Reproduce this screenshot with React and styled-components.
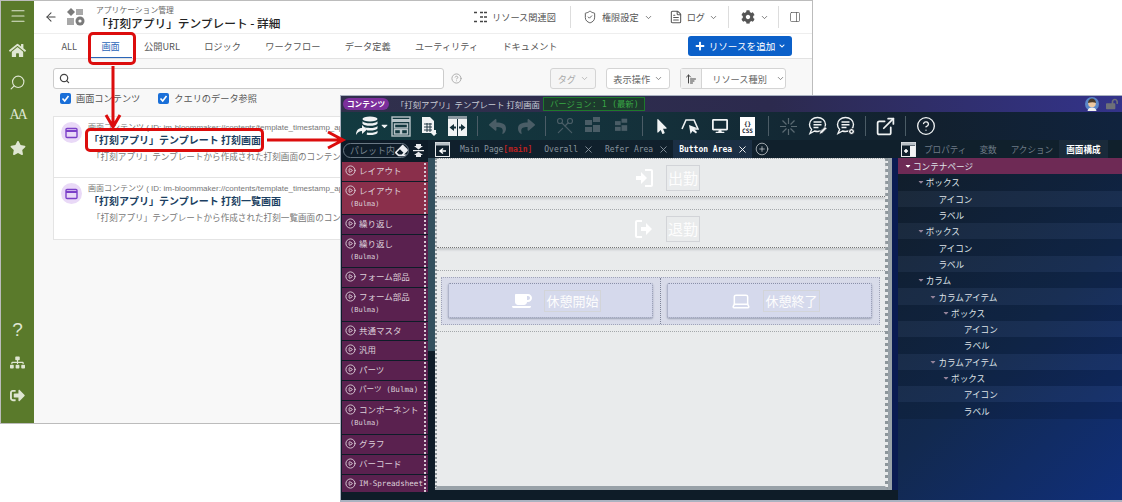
import React from "react";
import styled, { createGlobalStyle } from "styled-components";
import { FaHome, FaStar, FaSitemap, FaCog, FaChevronDown, FaCoffee, FaEraser, FaReply, FaMousePointer, FaDesktop, FaLockOpen, FaPlus, FaSignOutAlt, FaCaretDown } from "react-icons/fa";
import { Search, Menu, ArrowLeft, CircleHelp, ShieldCheck, ChevronDown, FileText, PanelRight, CirclePlay, X, CirclePlus, Laptop, ExternalLink, ArrowUpWideNarrow, Scissors } from "lucide-react";

const JP = `"Noto Sans CJK JP", "Noto Sans", sans-serif`;
const MONO = `"DejaVu Sans Mono", "Noto Sans CJK JP", monospace`;

const Global = createGlobalStyle`
  html, body { margin: 0; padding: 0; background: #fff; }
  body { font-family: ${JP}; }
  * { box-sizing: border-box; }
`;

const Desk = styled.div`
  position: relative;
  width: 1122px;
  height: 502px;
  overflow: hidden;
  background: #fff;
`;

/* back window */
const BackWindow = styled.div`
  position: absolute;
  left: 0;
  top: 0;
  width: 813px;
  height: 424px;
  display: flex;
  background: #fff;
  border: 1px solid #bcbcbc;
  overflow: hidden;
`;
const Side = styled.nav`
  width: 33px;
  flex: none;
  background: #5a7a2b;
  color: #dfe6d2;
  display: flex;
  flex-direction: column;
  align-items: center;
  padding-top: 4px;
`;
const SideItem = styled.div`
  height: ${(p) => p.$h || 32.5}px;
  width: 100%;
  display: flex;
  align-items: center;
  justify-content: center;
  flex: none;
  margin-top: ${(p) => p.$mt || 0}px;
  margin-bottom: ${(p) => p.$mb || 0}px;
`;
const SerifMark = styled.span`
  font-family: "Liberation Serif", serif;
  font-size: 14px;
  letter-spacing: -2px;
  color: #dfe6d2;
`;
const HelpGlyph = styled.span`
  font-family: "Liberation Sans", sans-serif;
  font-size: 19px;
  color: #dfe6d2;
`;
const Main = styled.div`
  flex: 1;
  min-width: 0;
  display: flex;
  flex-direction: column;
`;
const Header = styled.header`
  height: 32px;
  flex: none;
  display: flex;
  align-items: center;
  padding: 0 11px 0 10px;
  color: #444;
`;
const AppIcon = styled.svg`
  width: 19px;
  height: 18px;
  margin-left: 8px;
`;
const HeadTitles = styled.div`
  margin-left: 11px;
  display: flex;
  flex-direction: column;
  line-height: 1;
`;
const Crumb = styled.span`
  font-size: 7.8px;
  color: #666;
  line-height: 10px;
`;
const PageTitle = styled.span`
  font-size: 11.7px;
  font-weight: 500;
  color: #222;
  line-height: 15px;
`;
const HeadRight = styled.div`
  margin-left: auto;
  display: flex;
  align-items: center;
  height: 22px;
`;
const HeadAction = styled.div`
  display: flex;
  align-items: center;
  gap: ${(p) => p.$gap || 5}px;
  font-size: 9.2px;
  color: #555;
  padding: 0 ${(p) => p.$pr ?? 13}px 0 ${(p) => p.$pl ?? 13}px;
  height: 100%;
  border-right: ${(p) => (p.$sep ? "1px solid #ddd" : "none")};
`;
const TabBar = styled.div`
  height: 26px;
  flex: none;
  display: flex;
  align-items: stretch;
  padding: 0 20px 0 15px;
  border-top: 1px solid #eee;
  border-bottom: 1px solid #e2e2e2;
`;
const Tab = styled.div`
  padding: 0 11.8px 0 12.5px;
  display: flex;
  align-items: center;
  font-size: 9.2px;
  color: ${(p) => (p.$on ? "#2b66b8" : "#555")};
  border-bottom: ${(p) => (p.$on ? "1px solid #2b66b8" : "none")};
`;
const AddBtn = styled.button`
  margin: 2px 0 2px auto;
  width: 104px;
  border: 0;
  border-radius: 3px;
  background: #0b60c9;
  color: #fff;
  font-family: ${JP};
  font-size: 9.6px;
  display: flex;
  align-items: center;
  justify-content: center;
  gap: 4px;
  padding: 0;
`;
const Body = styled.div`
  flex: 1;
  background: #f8f8f8;
  padding: 9px 26px 0 19px;
`;
const FilterRow = styled.div`
  display: flex;
  align-items: center;
  height: 21px;
`;
const SearchBox = styled.div`
  width: 392px;
  height: 21px;
  background: #fff;
  border: 1px solid #ccc;
  border-radius: 3px;
  display: flex;
  align-items: center;
  padding-left: 5px;
  color: #444;
`;
const HelpMark = styled.span`
  margin-left: 7px;
  color: #aaa;
  display: flex;
`;
const Select = styled.div`
  height: 21px;
  background: ${(p) => (p.$off ? "#f5f5f5" : "#fff")};
  border: 1px solid #d4d4d4;
  border-radius: 3px;
  display: flex;
  align-items: center;
  justify-content: center;
  gap: 4px;
  font-size: 9.2px;
  color: ${(p) => (p.$off ? "#aaa" : "#666")};
  width: ${(p) => p.$w}px;
  margin-left: ${(p) => p.$ml || 10}px;
  white-space: nowrap;
`;
const SortIcon = styled.div`
  width: 21px;
  height: 100%;
  background: #f2f2f2;
  border-right: 1px solid #d4d4d4;
  display: flex;
  align-items: center;
  justify-content: center;
  color: #444;
  flex: none;
`;
const SelectText = styled.span`
  margin: 0 5px 0 6px;
`;
const CheckRow = styled.div`
  display: flex;
  align-items: center;
  height: 18px;
  margin: 0 0 9px 7px;
  gap: 18px;
`;
const Check = styled.label`
  display: flex;
  align-items: center;
  gap: 5px;
  font-size: 9.2px;
  color: #555;
`;
const CheckBox = styled.span`
  width: 11px;
  height: 11px;
  border-radius: 2px;
  background: #1a6fd8;
  display: flex;
  align-items: center;
  justify-content: center;
`;
const Card = styled.article`
  height: 62px;
  background: #fff;
  border: 1px solid #e4e4e4;
  border-top-width: ${(p) => (p.$first ? 1 : 0)}px;
  display: flex;
  padding: 5px 7px;
`;
const CardBadge = styled.div`
  width: 21px;
  height: 21px;
  border-radius: 50%;
  background: #e9d9f7;
  flex: none;
  display: flex;
  align-items: center;
  justify-content: center;
`;
const CardBody = styled.div`
  margin-left: 6px;
  min-width: 0;
  white-space: nowrap;
  overflow: hidden;
`;
const CardMeta = styled.div`
  font-family: "Liberation Sans", ${JP};
  font-size: 8px;
  color: #777;
  line-height: 11px;
`;
const CardTitle = styled.div`
  font-size: 10px;
  font-weight: 700;
  color: #1c3f62;
  line-height: 13px;
  margin-left: 1px;
`;
const CardDesc = styled.div`
  font-size: 8.6px;
  color: #777;
  line-height: 14px;
  margin: 3px 0 0 4px;
`;

/* front window */
const Editor = styled.div`
  position: absolute;
  left: 340px;
  top: 95px;
  width: 782px;
  height: 407px;
  border: 1px solid #aab2c0;
  border-right: 0;
  border-bottom-width: 2px;
  background: #0e1c28;
  display: flex;
  flex-direction: column;
`;
const TitleBar = styled.div`
  height: 16px;
  flex: none;
  display: flex;
  align-items: center;
  padding: 0 3px 0 2px;
  background: linear-gradient(90deg, #30304c 0%, #2c2a4e 55%, #33338a 100%);
`;
const Pill = styled.span`
  background: #7c2f9b;
  color: #fff;
  font-size: 7.6px;
  font-weight: 700;
  border-radius: 8px;
  padding: 0 4px;
  line-height: 12px;
  width: 46px;
  text-align: center;
`;
const DocName = styled.span`
  margin-left: 7px;
  font-size: 8.4px;
  color: #c9ccd6;
  white-space: nowrap;
`;
const Version = styled.span`
  margin-left: 3px;
  width: 102px;
  height: 14px;
  border: 1px solid #1d7a2b;
  background: #1d3a2d;
  color: #39a845;
  font-size: 8.4px;
  font-family: ${MONO};
  line-height: 12px;
  padding-left: 6px;
  white-space: nowrap;
`;
const TitleTools = styled.div`
  margin-left: auto;
  display: flex;
  align-items: center;
  gap: 7px;
  margin-right: 1px;
`;
const Toolbar = styled.div`
  height: 28px;
  flex: none;
  display: flex;
  align-items: center;
  padding-left: 14px;
  background: linear-gradient(90deg, #123a40 0%, #14303a 40%, #12202e 75%, #10233e 100%);
`;
const Tool = styled.div`
  width: ${(p) => p.$w}px;
  margin-left: ${(p) => p.$ml || 0}px;
  height: 24px;
  flex: none;
  display: flex;
  align-items: center;
  justify-content: center;
  color: ${(p) => (p.$dim ? "#4a5d66" : "#f0f3f4")};
`;
const ToolSep = styled.div`
  width: 1px;
  height: 20px;
  background: #4b5c66;
  margin-left: ${(p) => p.$ml}px;
  flex: none;
`;
const CssChip = styled.div`
  width: 15px;
  height: 19px;
  background: #fff;
  color: #14202c;
  font-family: ${MONO};
  font-size: 6px;
  font-weight: 700;
  line-height: 7px;
  text-align: center;
  padding-top: 3px;
`;
const Workspace = styled.div`
  flex: 1;
  min-height: 0;
  display: flex;
`;
const Palette = styled.aside`
  width: 87px;
  flex: none;
  padding-left: 1px;
`;
const PaletteBar = styled.div`
  height: 22px;
  display: flex;
  align-items: center;
  padding: 0 0 2px 1px;
  color: #e8eaec;
`;
const PaletteSearch = styled.div`
  width: 66px;
  height: 15px;
  border: 1px solid #6a7884;
  border-radius: 8px;
  font-size: 9px;
  color: #76838e;
  padding-left: 6px;
  line-height: 13px;
  display: flex;
  align-items: center;
  justify-content: space-between;
  white-space: nowrap;
  overflow: hidden;
`;
const FoldIcon = styled.svg`
  margin-left: 4px;
  flex: none;
`;
const PaletteRow = styled.div`
  height: ${(p) => p.$h - 1}px;
  margin-bottom: 1px;
  background: ${(p) => (p.$hot ? "#8a2f4b" : "#5a214f")};
  color: #dccfd9;
  display: flex;
  justify-content: space-between;
  padding: 1px 2px 0 3px;
  overflow: hidden;
`;
const RowLabel = styled.div`
  font-family: ${(p) => (p.$latin ? MONO : JP)};
  font-size: ${(p) => (p.$latin ? 7.6 : 8.5)}px;
  line-height: 15px;
  display: flex;
  align-items: center;
  gap: 3px;
  white-space: nowrap;
`;
const RowSub = styled.div`
  font-family: ${MONO};
  font-size: 7px;
  line-height: 13px;
  margin-left: 5px;
`;
const Grip = styled.div`
  width: 2px;
  flex: none;
  height: 100%;
  border-left: 2px dotted #d8c8d4;
`;
const Center = styled.main`
  width: 470px;
  flex: none;
  display: flex;
  flex-direction: column;
`;
const DocTabs = styled.div`
  height: 18px;
  flex: none;
  display: flex;
  align-items: center;
  padding-left: 7px;
  background: #10202c;
`;
const ToggleIcon = styled.svg`
  width: 15px;
  height: 15px;
  flex: none;
`;
const DocTab = styled.div`
  height: 100%;
  display: flex;
  align-items: center;
  gap: 5px;
  font-family: ${MONO};
  font-size: 8px;
  white-space: pre;
  color: ${(p) => (p.$on ? "#fff" : "#88949e")};
  background: ${(p) => (p.$on ? "#1b2f44" : "transparent")};
  padding: 0 ${(p) => p.$pr ?? 8}px 0 ${(p) => p.$pl ?? 10}px;
  font-weight: ${(p) => (p.$on ? 700 : 400)};
`;
const MainTab = styled.span`
  display: inline;
`;
const MainMark = styled.span`
  color: #b92222;
  font-weight: 700;
`;
const CanvasWrap = styled.div`
  height: 332px;
  display: flex;
`;
const Strip = styled.div`
  width: 7px;
  flex: none;
  background: linear-gradient(180deg, #33505e 0 58%, #0e1c28 58%);
`;
const Canvas = styled.div`
  width: 453px;
  flex: none;
  background: #e9ebec;
  border-left: 2px dotted #8e979c;
  border-right: 3px dotted #8e979c;
  border-bottom: 4px solid #98a1a8;
`;
const EdgeStrip = styled.div`
  flex: 1;
  background: linear-gradient(90deg, #98a1a8 0 4px, #0a1b52 4px);
`;
const PunchRow = styled.div`
  height: ${(p) => p.$h}px;
  margin-bottom: ${(p) => p.$mb}px;
  border-top: 1px dotted #a4a8ab;
  border-bottom: 1px dotted #777;
  box-shadow: 0 2px 2px #c6c9cc;
  display: flex;
  align-items: center;
  justify-content: center;
  padding-left: 12px;
  gap: 12px;
  color: #fff;
`;
const LabelBox = styled.span`
  border: 1px solid #d2d4d8;
  color: #fdfdfd;
  font-size: ${(p) => p.$fs || 15}px;
  line-height: ${(p) => p.$lh || 24}px;
  padding: 0 1px;
`;
const Columns = styled.div`
  height: 62px;
  border-top: 1px dotted #a4a8ab;
  border-bottom: 1px dotted #a4a8ab;
  padding: 6px 5px 6px 4px;
`;
const ColumnsInner = styled.div`
  height: 48px;
  background: #d8dbe9;
  border: 1px dotted #a0a4b8;
  display: flex;
`;
const ColumnCell = styled.div`
  flex: 1;
  padding: 5px 7px 5px 6px;
  border-left: ${(p) => (p.$line ? "1px dotted #7e8498" : "none")};
`;
const BreakBtn = styled.div`
  height: 35px;
  background: #d5d9ec;
  border: 1px dotted #8a90a8;
  border-radius: 2px;
  box-shadow: 0 1px 2px #9aa0b4;
  display: flex;
  align-items: center;
  justify-content: center;
  padding-left: 12px;
  gap: 12px;
  color: #fff;
`;
const RightPanel = styled.aside`
  flex: 1;
  display: flex;
  flex-direction: column;
  background: linear-gradient(135deg, #14222f 0%, #12294f 55%, #102f7a 100%);
`;
const PanelTabs = styled.div`
  height: 18px;
  flex: none;
  display: flex;
  align-items: center;
  padding-left: 3px;
  background: #10202c;
  font-size: 8.6px;
  color: #6e7b86;
`;
const PanelTab = styled.span`
  margin-left: ${(p) => p.$ml}px;
  color: ${(p) => (p.$on ? "#fff" : "#6e7b86")};
  background: ${(p) => (p.$on ? "#1a2a3a" : "transparent")};
  font-weight: ${(p) => (p.$on ? 700 : 400)};
  padding: 0 ${(p) => (p.$on ? 7 : 0)}px;
  line-height: 18px;
`;
const TreeRow = styled.div`
  height: 16.3px;
  display: flex;
  align-items: center;
  padding-left: ${(p) => 6 + p.$level * 12.7}px;
  font-size: 8.6px;
  color: #dfe3e8;
  background: ${(p) => (p.$root ? "#6e2a55" : p.$even ? "rgba(255,255,255,0.03)" : "rgba(0,0,0,0.12)")};
  white-space: nowrap;
`;
const Caret = styled.span`
  width: 9px;
  flex: none;
  display: flex;
  visibility: ${(p) => (p.$open ? "visible" : "hidden")};
  color: ${(p) => (p.$root ? "#fff" : "#94839a")};
`;

/* callouts */
const Highlight = styled.div`
  position: absolute;
  left: ${(p) => p.$x}px;
  top: ${(p) => p.$y}px;
  width: ${(p) => p.$w}px;
  height: ${(p) => p.$h}px;
  border: 3px solid #dc0d0d;
  border-radius: 5px;
`;
const Arrows = styled.svg`
  position: absolute;
  left: 0;
  top: 0;
  pointer-events: none;
`;

const TABS = ["ALL", "画面", "公開URL", "ロジック", "ワークフロー", "データ定義", "ユーティリティ", "ドキュメント"];

const PALETTE = [
  ["レイアウト", null, 20, true],
  ["レイアウト", "(Bulma)", 33, true],
  ["繰り返し", null, 20],
  ["繰り返し", "(Bulma)", 33],
  ["フォーム部品", null, 20],
  ["フォーム部品", "(Bulma)", 34],
  ["共通マスタ", null, 19],
  ["汎用", null, 20],
  ["パーツ", null, 20],
  ["パーツ (Bulma)", null, 20],
  ["コンポーネント", "(Bulma)", 34],
  ["グラフ", null, 20],
  ["バーコード", null, 20],
  ["IM-Spreadsheet", null, 18],
];

const TREE = [
  ["コンテナページ", 0, true],
  ["ボックス", 1, true],
  ["アイコン", 2],
  ["ラベル", 2],
  ["ボックス", 1, true],
  ["アイコン", 2],
  ["ラベル", 2],
  ["カラム", 1, true],
  ["カラムアイテム", 2, true],
  ["ボックス", 3, true],
  ["アイコン", 4],
  ["ラベル", 4],
  ["カラムアイテム", 2, true],
  ["ボックス", 3, true],
  ["アイコン", 4],
  ["ラベル", 4],
];

const WindowGlyph = () => (
  <svg width="13" height="12" viewBox="0 0 13 12" fill="none" stroke="#7b3fc8" strokeWidth="1.4">
    <rect x="1" y="1.5" width="11" height="9" rx="1" />
    <path d="M1 4h11" strokeWidth="2" />
  </svg>
);

const LoginGlyph = ({ out }) => (
  <svg width="20" height="20" viewBox="0 0 20 20" fill="none">
    {out ? (
      <>
        <path d="M8 2H3a1 1 0 0 0-1 1v14a1 1 0 0 0 1 1h5" stroke="#fff" strokeWidth="2" />
        <path d="M7 8h5V4l6 6-6 6v-4H7z" fill="#fff" />
      </>
    ) : (
      <>
        <path d="M11 2h6a1 1 0 0 1 1 1v14a1 1 0 0 1-1 1h-6" stroke="#fff" strokeWidth="2" />
        <path d="M2 8h5V4l6 6-6 6v-4H2z" fill="#fff" />
      </>
    )}
  </svg>
);

const DataGlyph = () => (
  <svg width="23" height="20" viewBox="0 0 23 20" fill="#f0f3f4">
    <ellipse cx="15" cy="3" rx="7.5" ry="2.6" />
    <path d="M7.5 5.2c1.4 1.4 3.9 2 7.5 2s6.100-.6 7.500-2v2.600c-1.400 1.400-3.900 2-7.500 2s-6.100-.6-7.500-2z" />
    <path d="M9 11c1.500.6 3.500.9 6 .9 3.600 0 6.100-.6 7.500-2v2.600c-1.400 1.400-3.900 2-7.500 2-.9 0-1.800 0-2.600-.1z" />
    <path d="M12 16.500c1 .1 2 .2 3 .2 3.600 0 6.100-.6 7.500-2v2.300c-1.400 1.400-3.900 2-7.500 2-1.200 0-2.300-.1-3.300-.2z" />
    <path d="M1 19c0-4.500 2.500-7 6-7V9l5 4.500L7 18v-3c-2.500 0-4.500 1.200-6 4z" />
  </svg>
);

const FileGlyph = () => (
  <svg width="15" height="19" viewBox="0 0 15 19">
    <path d="M0 0h8l4 4v12H0z" fill="#f0f3f4" />
    <path d="M2 7h8M2 10h8M2 13h8M5 6v9M8 6v9" stroke="#14303a" strokeWidth="0.9" />
    <path d="M10 13h4v3h1l-3 3-3-3h1z" fill="#f0f3f4" />
  </svg>
);

const ChatGlyph = ({ gear }) => (
  <svg width="20" height="20" viewBox="0 0 20 20" fill="none" stroke="#f0f3f4" strokeWidth="1.4">
    <path d="M9.500 1.500c4.500 0 8 3 8 7s-3.500 7-8 7c-1 0-2-.1-2.900-.5L2 17.500l1.600-4C2.300 12.200 1.500 10.500 1.500 8.500c0-4 3.500-7 8-7z" />
    <path d="M5.500 6h8M5.500 8.800h8M5.500 11.500h5" />
    {gear ? (
      <>
        <circle cx="15.500" cy="15.500" r="3" fill="#f0f3f4" stroke="#14202c" strokeWidth="1" />
        <circle cx="15.500" cy="15.500" r="1" fill="#14202c" stroke="none" />
      </>
    ) : (
      <path d="M11 18.500l1-3 5-5 2 2-5 5z" fill="#f0f3f4" stroke="#14202c" strokeWidth="0.8" />
    )}
  </svg>
);

const CursorOverShape = () => (
  <svg width="18" height="18" viewBox="0 0 18 18" fill="none">
    <path d="M1 12 5 3h8l4 9H9" stroke="#f0f3f4" strokeWidth="1.6" />
    <path d="M8 8l1.500 9 2-3 3.500 2.500 1-1.500-3-3 3-1z" fill="#f0f3f4" />
  </svg>
);

const LayoutGlyph = () => (
  <svg width="20" height="21" viewBox="0 0 20 21" fill="none" stroke="#b8c4c8" strokeWidth="1.4">
    <rect x="1" y="1" width="18" height="19" />
    <path d="M1 4.500h18" strokeWidth="3" />
    <rect x="3.500" y="8" width="13" height="4" />
    <rect x="3.500" y="13.500" width="6" height="4.500" />
    <rect x="10.500" y="13.500" width="6" height="4.500" />
  </svg>
);

const SwapGlyph = () => (
  <svg width="19" height="20" viewBox="0 0 19 20" fill="none">
    <rect x="0" y="0" width="19" height="20" fill="#f0f3f4" />
    <rect x="0" y="0" width="19" height="3" fill="#8a98a0" />
    <path d="M9.500 3v17" stroke="#14303a" strokeWidth="1" />
    <path d="M1.500 11.500 6 8v2.500h2v2H6V15zM17.500 11.500 13 8v2.500h-2v2h2V15z" fill="#14303a" />
  </svg>
);

const StackGlyph = () => (
  <svg width="16" height="18" viewBox="0 0 16 18" fill="#4a5d66">
    <rect x="0" y="3" width="7" height="5" />
    <rect x="8" y="0" width="7" height="5" />
    <rect x="0" y="10" width="7" height="5" />
    <rect x="8" y="8" width="7" height="7" />
  </svg>
);

const SparkGlyph = () => (
  <svg width="19" height="19" viewBox="0 0 19 19" stroke="#5a6a72" strokeWidth="1.2">
    <path d="M9.500 1v6M9.500 12v6M1 9.500h6M12 9.500h6M3.500 3.500l4 4M11.500 11.500l4 4M15.500 3.500l-4 4M7.500 11.500l-4 4" />
  </svg>
);

const Avatar = () => (
  <svg width="14" height="14" viewBox="0 0 14 14">
    <circle cx="7" cy="7" r="7" fill="#5a86c8" />
    <circle cx="7" cy="6.500" r="3.800" fill="#eec8a0" />
    <path d="M3 6c0-3 2-4.500 4-4.500S11 3 11 6C9 5 6 5 3 6z" fill="#4a3a2a" />
    <path d="M2.500 14c.5-2.500 2-3.500 4.500-3.500s4 1 4.500 3.500z" fill="#f0f0f0" />
  </svg>
);

const FoldGlyph = () => (
  <FoldIcon width="11" height="13" viewBox="0 0 11 13" fill="#e8eaec">
    <path d="M3 0h5v2h2L5.500 5.500 1 2h2z" />
    <rect x="0" y="6" width="11" height="1.200" />
    <path d="M3 13h5v-2h2L5.500 7.800 1 11h2z" />
  </FoldIcon>
);

const PanelToggle = () => (
  <ToggleIcon viewBox="0 0 15 15">
    <rect x="0.500" y="0.500" width="14" height="14" fill="#10202c" stroke="#e8eaec" />
    <rect x="0.500" y="0.500" width="14" height="3" fill="#b8c0c6" />
    <rect x="9" y="4" width="5" height="10" fill="#f2f4f5" />
    <path d="M3 9h4M5 7v4" stroke="#fff" strokeWidth="1.500" />
  </ToggleIcon>
);

const CanvasToggle = () => (
  <ToggleIcon viewBox="0 0 15 15">
    <rect x="0.500" y="0.500" width="14" height="14" fill="#10202c" stroke="#e8eaec" />
    <rect x="0.500" y="0.500" width="14" height="3" fill="#b8c0c6" />
    <path d="M11 9H6M8 6.500 5 9l3 2.500" stroke="#fff" strokeWidth="1.500" fill="none" />
  </ToggleIcon>
);

const Tick = () => (
  <svg width="9" height="9" viewBox="0 0 9 9" fill="none" stroke="#fff" strokeWidth="1.6">
    <path d="M1.500 4.500 3.700 7 7.500 2" />
  </svg>
);

const ListCard = ({ first, title, desc }) => (
  <Card $first={first}>
    <CardBadge>
      <WindowGlyph />
    </CardBadge>
    <CardBody>
      <CardMeta>画面コンテンツ ( ID: im-bloommaker://contents/template_timestamp_app/{first ? "timestamp" : "timestamp_list"} )</CardMeta>
      <CardTitle>{title}</CardTitle>
      <CardDesc>{desc}</CardDesc>
    </CardBody>
  </Card>
);

export default function App() {
  return (
    <Desk>
      <Global />
      <BackWindow>
        <Side>
          <SideItem $h={22} $mb={7}><Menu size={18} strokeWidth={1.5} /></SideItem>
          <SideItem><FaHome size={17} /></SideItem>
          <SideItem><Search size={17} strokeWidth={1.6} style={{ transform: "scaleX(-1)" }} /></SideItem>
          <SideItem><SerifMark>AA</SerifMark></SideItem>
          <SideItem><FaStar size={16} /></SideItem>
          <SideItem $mt={150}><HelpGlyph>?</HelpGlyph></SideItem>
          <SideItem><FaSitemap size={15} /></SideItem>
          <SideItem><FaSignOutAlt size={15} /></SideItem>
        </Side>
        <Main>
          <Header>
            <ArrowLeft size={14} strokeWidth={1.8} />
            <AppIcon viewBox="0 0 19 18" fill="#7a7a7a">
              <path d="M5 0l4 4-4 4-4-4z" />
              <rect x="10" y="1" width="7" height="6" fill="#a8a8a8" />
              <rect x="1" y="10" width="7" height="7" fill="#a8a8a8" />
              <circle cx="14" cy="13" r="4.500" />
              <circle cx="14" cy="13" r="1.600" fill="#fff" />
            </AppIcon>
            <HeadTitles>
              <Crumb>アプリケーション管理</Crumb>
              <PageTitle>「打刻アプリ」テンプレート - 詳細</PageTitle>
            </HeadTitles>
            <HeadRight>
              <HeadAction $sep $pr={14}>
                <svg width="13" height="12" viewBox="0 0 13 12" stroke="#444" strokeWidth="1.4" fill="none">
                  <path d="M0 1.500h3M0 10.500h3M6 1.500h7M6 6h7M6 10.500h7" strokeDasharray="3 1" />
                </svg>
                リソース関連図
              </HeadAction>
              <HeadAction $pl={12} $pr={3}>
                <ShieldCheck size={14} strokeWidth={1.6} />
                権限設定 <ChevronDown size={9} />
              </HeadAction>
              <HeadAction $sep $pl={13} $pr={10} $gap={4}>
                <FileText size={14} strokeWidth={1.8} />
                ログ <ChevronDown size={9} />
              </HeadAction>
              <HeadAction $sep $pl={12} $pr={9}>
                <FaCog size={14} />
                <ChevronDown size={9} />
              </HeadAction>
              <HeadAction $pl={10} $pr={0}>
                <PanelRight size={12} strokeWidth={1.4} />
              </HeadAction>
            </HeadRight>
          </Header>
          <TabBar>
            {TABS.map((t) => (
              <Tab key={t} $on={t === "画面"}>{t}</Tab>
            ))}
            <AddBtn>
              <FaPlus size={10} /> リソースを追加 <FaChevronDown size={6} />
            </AddBtn>
          </TabBar>
          <Body>
            <FilterRow>
              <SearchBox>
                <Search size={11} strokeWidth={2.6} />
              </SearchBox>
              <HelpMark>
                <CircleHelp size={11} />
              </HelpMark>
              <Select $off $w={46} $ml={88}>タグ <ChevronDown size={9} /></Select>
              <Select $w={64}>表示操作 <ChevronDown size={9} /></Select>
              <Select $w={106}>
                <SortIcon><ArrowUpWideNarrow size={12} /></SortIcon>
                <SelectText>リソース種別</SelectText>
                <ChevronDown size={9} />
              </Select>
            </FilterRow>
            <CheckRow>
              <Check><CheckBox><Tick /></CheckBox>画面コンテンツ</Check>
              <Check><CheckBox><Tick /></CheckBox>クエリのデータ参照</Check>
            </CheckRow>
            <ListCard first title="「打刻アプリ」テンプレート 打刻画面" desc="「打刻アプリ」テンプレートから作成された打刻画面のコンテンツです。" />
            <ListCard title="「打刻アプリ」テンプレート 打刻一覧画面" desc="「打刻アプリ」テンプレートから作成された打刻一覧画面のコンテンツです。" />
          </Body>
        </Main>
      </BackWindow>

      <Editor>
        <TitleBar>
          <Pill>コンテンツ</Pill>
          <DocName>「打刻アプリ」テンプレート 打刻画面</DocName>
          <Version>バージョン: 1 (最新)</Version>
          <TitleTools>
            <Avatar />
            <FaLockOpen size={12} color="#6e7078" />
          </TitleTools>
        </TitleBar>
        <Toolbar>
          <Tool $w={23}><DataGlyph /></Tool>
          <Tool $w={9} $ml={2}><FaCaretDown size={10} /></Tool>
          <Tool $w={20} $ml={2}><LayoutGlyph /></Tool>
          <Tool $w={15} $ml={11}><FileGlyph /></Tool>
          <Tool $w={19} $ml={11}><SwapGlyph /></Tool>
          <ToolSep $ml={10} />
          <Tool $w={20} $ml={9} $dim><FaReply size={17} /></Tool>
          <Tool $w={20} $ml={9} $dim><FaReply size={17} style={{ transform: "scaleX(-1)" }} /></Tool>
          <ToolSep $ml={9} />
          <Tool $w={20} $ml={9} $dim><Scissors size={20} strokeWidth={1.4} style={{ transform: "rotate(90deg)" }} /></Tool>
          <Tool $w={16} $ml={10} $dim><StackGlyph /></Tool>
          <Tool $w={13} $ml={14} $dim><StackGlyph /></Tool>
          <ToolSep $ml={14} />
          <Tool $w={14} $ml={12}><FaMousePointer size={15} /></Tool>
          <Tool $w={18} $ml={12}><CursorOverShape /></Tool>
          <Tool $w={17} $ml={12}><FaDesktop size={16} /></Tool>
          <Tool $w={15} $ml={12}><CssChip>{"{}"}<br />CSS</CssChip></Tool>
          <ToolSep $ml={13} />
          <Tool $w={19} $ml={10}><SparkGlyph /></Tool>
          <Tool $w={20} $ml={10}><ChatGlyph /></Tool>
          <Tool $w={20} $ml={8}><ChatGlyph gear /></Tool>
          <ToolSep $ml={9} />
          <Tool $w={21} $ml={9}><ExternalLink size={21} strokeWidth={2} /></Tool>
          <ToolSep $ml={9} />
          <Tool $w={21} $ml={9}><CircleHelp size={20} strokeWidth={1.6} /></Tool>
        </Toolbar>
        <Workspace>
          <Palette>
            <PaletteBar>
              <PaletteSearch>パレット内<FaEraser size={13} color="#eef0f2" style={{ flex: "none" }} /></PaletteSearch>
              <FoldGlyph />
            </PaletteBar>
            {PALETTE.map(([label, sub, h, hot], i) => (
              <PaletteRow key={i} $h={h} $hot={hot}>
                <div>
                  <RowLabel $latin={/[A-Z]/.test(label)}>
                    <CirclePlay size={11} strokeWidth={2} />
                    {label}
                  </RowLabel>
                  {sub && <RowSub>{sub}</RowSub>}
                </div>
                <Grip />
              </PaletteRow>
            ))}
          </Palette>
          <Center>
            <DocTabs>
              <CanvasToggle />
              <DocTab><MainTab>Main Page<MainMark>[main]</MainMark></MainTab></DocTab>
              <DocTab $pl={4} $pr={5}>Overall<X size={11} /></DocTab>
              <DocTab $pl={6} $pr={4}>Refer Area<X size={11} /></DocTab>
              <DocTab $on $pl={6} $pr={4}>Button Area<X size={11} /></DocTab>
              <DocTab $pl={3} $pr={0}><CirclePlus size={14} strokeWidth={1.2} color="#d8dde0" /></DocTab>
            </DocTabs>
            <CanvasWrap>
              <Strip />
              <Canvas>
                <PunchRow $h={39} $mb={12}>
                  <LoginGlyph />
                  <LabelBox>出勤</LabelBox>
                </PunchRow>
                <PunchRow $h={39} $mb={22}>
                  <LoginGlyph out />
                  <LabelBox>退勤</LabelBox>
                </PunchRow>
                <Columns>
                  <ColumnsInner>
                    <ColumnCell>
                      <BreakBtn>
                        <FaCoffee size={20} />
                        <LabelBox $fs={13} $lh={20}>休憩開始</LabelBox>
                      </BreakBtn>
                    </ColumnCell>
                    <ColumnCell $line>
                      <BreakBtn>
                        <Laptop size={20} strokeWidth={1.8} />
                        <LabelBox $fs={13} $lh={20}>休憩終了</LabelBox>
                      </BreakBtn>
                    </ColumnCell>
                  </ColumnsInner>
                </Columns>
              </Canvas>
              <EdgeStrip />
            </CanvasWrap>
          </Center>
          <RightPanel>
            <PanelTabs>
              <PanelToggle />
              <PanelTab $ml={8}>プロパティ</PanelTab>
              <PanelTab $ml={13}>変数</PanelTab>
              <PanelTab $ml={14}>アクション</PanelTab>
              <PanelTab $ml={6} $on>画面構成</PanelTab>
            </PanelTabs>
            {TREE.map(([label, level, open], i) => (
              <TreeRow key={i} $level={level} $root={i === 0} $even={i % 2 === 0}>
                <Caret $root={i === 0} $open={open}>
                  <FaCaretDown size={8} />
                </Caret>
                {label}
              </TreeRow>
            ))}
          </RightPanel>
        </Workspace>
      </Editor>

      <Highlight $x={88} $y={32} $w={48} $h={33} />
      <Highlight $x={85} $y={128} $w={179} $h={24} />
      <Arrows width="1122" height="502" viewBox="0 0 1122 502" fill="none" stroke="#dc0d0d" strokeWidth="3">
        <path d="M113 66v60M106 115l7 12 7-12" />
        <path d="M267 140h75M328 132l15 8-15 8" />
      </Arrows>
    </Desk>
  );
}
